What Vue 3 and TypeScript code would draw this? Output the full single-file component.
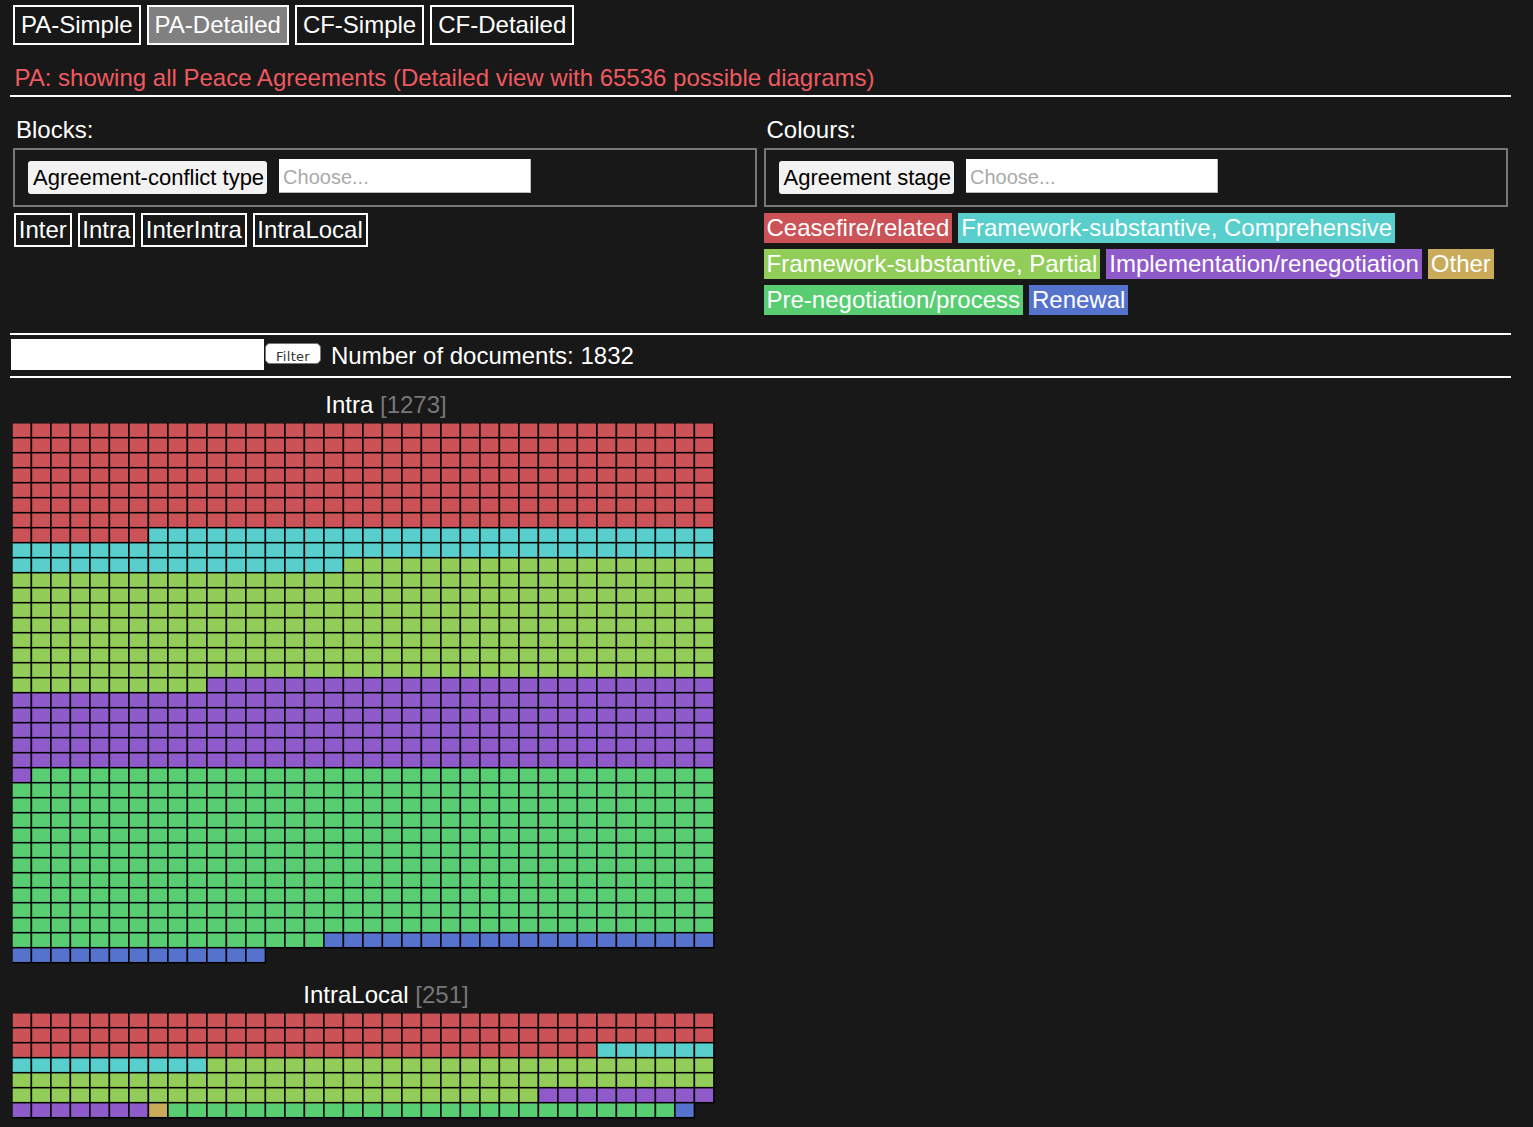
<script setup lang="ts">
interface Segment { name: string; count: number }
interface Block { title: string; total: number; segments: Segment[] }

const COLOURS: Record<string, string> = {
  ceasefire: '#cb5257',
  comprehensive: '#58cfcd',
  partial: '#92cd5a',
  implementation: '#8f5ac9',
  other: '#c9ab5a',
  prenegotiation: '#58cd72',
  renewal: '#5573cd',
}

const views = ['PA-Simple', 'PA-Detailed', 'CF-Simple', 'CF-Detailed']
const blockKeys = ['Inter', 'Intra', 'InterIntra', 'IntraLocal']
const legendRows = [
  [['Ceasefire/related', 'ceasefire'], ['Framework-substantive, Comprehensive', 'comprehensive']],
  [['Framework-substantive, Partial', 'partial'], ['Implementation/renegotiation', 'implementation'], ['Other', 'other']],
  [['Pre-negotiation/process', 'prenegotiation'], ['Renewal', 'renewal']],
]

const blocks: Block[] = [
  {
    title: 'Intra',
    total: 1273,
    segments: [
      { name: 'ceasefire', count: 259 },
      { name: 'comprehensive', count: 82 },
      { name: 'partial', count: 281 },
      { name: 'implementation', count: 207 },
      { name: 'prenegotiation', count: 411 },
      { name: 'renewal', count: 33 },
    ],
  },
  {
    title: 'IntraLocal',
    total: 251,
    segments: [
      { name: 'ceasefire', count: 102 },
      { name: 'comprehensive', count: 16 },
      { name: 'partial', count: 89 },
      { name: 'implementation', count: 16 },
      { name: 'other', count: 1 },
      { name: 'prenegotiation', count: 26 },
      { name: 'renewal', count: 1 },
    ],
  },
]

const COLS = 36
const W = 19.5
const H = 15

function cells(block: Block) {
  const out: { x: number; y: number; fill: string }[] = []
  let i = 0
  for (const s of block.segments) {
    for (let n = 0; n < s.count; n++, i++) {
      out.push({ x: (i % COLS) * W - 0.1, y: Math.floor(i / COLS) * H - 0.3, fill: COLOURS[s.name] })
    }
  }
  return out
}
function rows(block: Block) {
  return Math.ceil(block.total / COLS)
}
</script>

<template>
  <div class="page">
    <nav class="views">
      <button v-for="v in views" :key="v" class="view" :class="{ active: v === 'PA-Detailed' }">{{ v }}</button>
    </nav>
    <div class="title">PA: showing all Peace Agreements (Detailed view with 65536 possible diagrams)</div>
    <div class="rule"></div>
    <section class="controls">
      <div class="col">
        <div class="label">Blocks:</div>
        <div class="picker">
          <span class="chip">Agreement-conflict type</span>
          <input class="choose" placeholder="Choose..." />
        </div>
        <div class="keys">
          <span v-for="k in blockKeys" :key="k" class="key">{{ k }}</span>
        </div>
      </div>
      <div class="col right">
        <div class="label">Colours:</div>
        <div class="picker">
          <span class="chip">Agreement stage</span>
          <input class="choose" placeholder="Choose..." />
        </div>
        <div class="legend">
          <div v-for="(row, r) in legendRows" :key="r" class="legend-row">
            <span v-for="t in row" :key="t[0]" class="tag" :style="{ background: COLOURS[t[1]] }">{{ t[0] }}</span>
          </div>
        </div>
      </div>
    </section>
    <div class="rule"></div>
    <div class="filter">
      <input class="filter-input" />
      <button class="filter-btn">Filter</button>
      <span class="count">Number of documents: 1832</span>
    </div>
    <div class="rule"></div>
    <section v-for="b in blocks" :key="b.title" class="block">
      <div class="block-title">{{ b.title }} <span class="num">[{{ b.total }}]</span></div>
      <svg class="waffle" :width="COLS * W + 2" :height="rows(b) * H + 1">
        <rect
          v-for="(c, i) in cells(b)"
          :key="i"
          :x="c.x"
          :y="c.y"
          :width="W"
          :height="H"
          :fill="c.fill"
          stroke="#000"
          stroke-width="1.5"
        />
      </svg>
    </section>
  </div>
</template>

<style>
html, body { margin: 0; background: #181818; }
</style>

<style scoped>
.page {
  width: 1501px;
  margin-left: 10px;
  height: 1127px;
  overflow: hidden;
  font-family: "Liberation Sans", Arial, sans-serif;
  font-size: 24px;
  color: #fff;
}
.views { display: flex; gap: 6px; padding: 5px 0 0 3px; }
.view {
  font: inherit;
  color: #fff;
  background: transparent;
  border: 2px solid #fff;
  padding: 0 6px;
  height: 40px;
  line-height: 36px;
}
.view.active { background: #808080; }
.title { color: #ef5a60; margin: 19px 0 0 4.5px; line-height: 28px; height: 31px; }
.rule { height: 2px; background: #fff; }
.controls { display: flex; gap: 7px; padding: 0 3px; height: 236px; }
.col { width: 744px; }
.col.right { width: 745px; }
.label { margin: 19px 0 0 3px; height: 32px; line-height: 28px; }
.picker {
  box-sizing: border-box;
  height: 59px;
  border: 2px solid #777;
  display: flex;
  align-items: flex-start;
  padding: 9px 13px;
  gap: 12px;
}
.chip {
  margin-top: 2px;
  height: 33px;
  line-height: 33px;
  padding: 0 3px 0 5px;
  background: #f2f2f2;
  color: #000;
  border-radius: 3px;
  white-space: nowrap;
  font-size: 22px;
}
.choose {
  box-sizing: border-box;
  width: 252px;
  height: 34px;
  border: 0;
  border-bottom: 1px solid #bbb;
  border-right: 1px solid #bbb;
  padding: 3px 4px 0;
  font: 20px "Liberation Sans", Arial, sans-serif;
  background: #fff;
  outline: 0;
}
.choose::placeholder { color: #aaa; opacity: 1; }
.keys { display: flex; gap: 6px; margin-top: 6px; margin-left: 1px; }
.key { border: 2px solid #fff; padding: 0 2.75px; height: 30px; line-height: 30px; }
.legend { margin-top: 6px; display: flex; flex-direction: column; gap: 6px; }
.legend-row { display: flex; gap: 6px; }
.tag { padding: 0 3px; height: 30px; line-height: 29px; white-space: nowrap; }
.filter { display: flex; align-items: flex-start; height: 41px; margin-left: 1px; }
.filter-input {
  box-sizing: border-box;
  width: 253px;
  height: 31px;
  border: 0;
  background: #fff;
  margin: 4px 1px 0 0;
  padding: 0;
}
.filter-btn {
  box-sizing: border-box;
  width: 56px;
  height: 21px;
  border: 1px solid #777;
  border-radius: 5px;
  background: #fff;
  color: #333;
  font: 13px "DejaVu Sans", sans-serif;
  letter-spacing: 0.3px;
  padding: 5px 0 0;
  margin: 8px 10px 0 0;
}
.count { line-height: 28px; margin-top: 7px; }
.block { width: 752px; }
.block-title { text-align: center; line-height: 28px; height: 32px; margin-top: 13px; }
.num { color: #777; }
.waffle { display: block; margin-left: 2px; }
.block + .block .block-title { margin-top: 17px; }
</style>
